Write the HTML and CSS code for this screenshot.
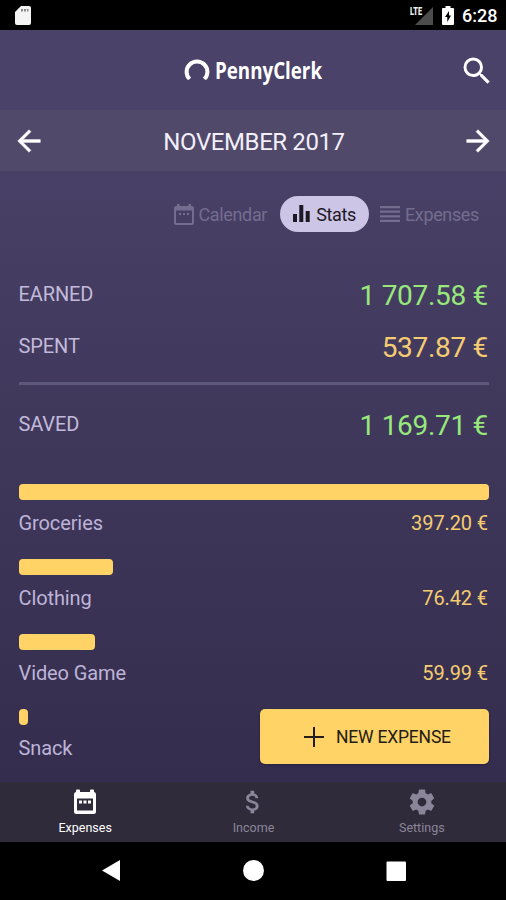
FILE: index.html
```
<!DOCTYPE html>
<html lang="en">
<head>
  <meta charset="UTF-8">
  <title>PennyClerk</title>
  <link rel="stylesheet" href="styles.css">
</head>
<body>
  <div class="app">
    <div class="status-bar">
      <svg class="sd-card" width="16" height="19" viewBox="0 0 16 19">
        <path fill="#f4f4f4" d="M6 0h8a2 2 0 0 1 2 2v15a2 2 0 0 1-2 2H2a2 2 0 0 1-2-2V6z"/>
        <path fill="#888" d="M6 3h2v2.500H6zM9 3h2v2.500H9zM12 3h1.500v2.500H12z"/>
      </svg>
      <div class="status-icons">
        <svg width="24" height="20" viewBox="0 0 24 20">
          <path fill="#4c4c4c" d="M23 1v18H5z"/>
          <path fill="#000" d="M0 0h13v11H0z"/>
          <text class="lte" x="0" y="9" textLength="12" lengthAdjust="spacingAndGlyphs">LTE</text>
        </svg>
        <svg class="battery" width="12" height="19" viewBox="0 0 12 19">
          <path fill="#fff" d="M3.500 0h5v2H11a1 1 0 0 1 1 1v15a1 1 0 0 1-1 1H1a1 1 0 0 1-1-1V3a1 1 0 0 1 1-1h2.500z"/>
          <path fill="#000" d="M7 5L3 11h2.300v5L9 9.500H7z"/>
        </svg>
        <span class="clock">6:28</span>
      </div>
    </div>

    <div class="main">
      <header class="header">
        <svg class="logo" width="144" height="44" viewBox="0 0 144 44">
          <path fill="none" stroke="#fff" stroke-width="4" d="M5.600 30.200A10.400 10.400 0 1 1 20.400 30.200"/>
          <path class="logo-cut" d="M0 30.800h27v4H0z"/>
          <text class="logo-text" x="31" y="30" textLength="107" lengthAdjust="spacingAndGlyphs">PennyClerk</text>
        </svg>
        <svg class="search" width="36" height="36" viewBox="0 0 24 24"><path fill="#fff" d="M15.500 14h-.79l-.28-.27A6.471 6.471 0 0 0 16 9.500 6.500 6.500 0 1 0 9.500 16c1.610 0 3.090-.59 4.230-1.570l.27.28v.79l5 4.990L20.490 19l-4.990-5zm-6 0C7.010 14 5 11.990 5 9.500S7.010 5 9.500 5 14 7.010 14 9.500 11.990 14 9.500 14z"/></svg>
      </header>

      <div class="month">
        <svg width="34" height="34" viewBox="0 0 24 24"><path fill="#fff" stroke="#fff" stroke-width=".3" d="M20 11H7.830l5.590-5.590L12 4l-8 8 8 8 1.410-1.410L7.830 13H20v-2z"/></svg>
        <span class="month-name">NOVEMBER 2017</span>
        <svg width="34" height="34" viewBox="0 0 24 24"><path fill="#fff" stroke="#fff" stroke-width=".3" d="M12 4l-1.410 1.410L16.170 11H4v2h12.170l-5.580 5.590L12 20l8-8z"/></svg>
      </div>

      <div class="tabs">
        <div class="tab">
          <svg width="20" height="22" viewBox="0 0 20 22">
            <path fill="none" stroke="currentColor" stroke-width="2" d="M2 4h16a1 1 0 0 1 1 1v15a1 1 0 0 1-1 1H2a1 1 0 0 1-1-1V5a1 1 0 0 1 1-1z"/>
            <path fill="currentColor" d="M3 1h2.500v3H3zM14.500 1H17v3h-2.500zM1 4h18v3.500H1zM5 10h2v2H5zM9 10h2v2H9zM13 10h2v2h-2z"/>
          </svg>
          <span>Calendar</span>
        </div>
        <div class="tab active">
          <svg width="17" height="18" viewBox="0 0 17 18"><path fill="currentColor" d="M0 9h4v8H0zM6.300 0h4v17h-4zM12.700 6h4v11h-4z"/></svg>
          <span>Stats</span>
        </div>
        <div class="tab">
          <svg width="20" height="17" viewBox="0 0 20 17"><path fill="currentColor" d="M0 0h20v2.200H0zM0 4.600h20v2.200H0zM0 9.200h20v2.200H0zM0 13.800h20V16H0z"/></svg>
          <span>Expenses</span>
        </div>
      </div>

      <div class="summary">
        <div class="summary-row"><span>EARNED</span><span class="sum green">1 707.58 €</span></div>
        <div class="summary-row"><span>SPENT</span><span class="sum yellow">537.87 €</span></div>
        <hr class="line">
        <div class="summary-row"><span>SAVED</span><span class="sum green">1 169.71 €</span></div>
      </div>

      <div class="categories">
        <div class="category">
          <div class="bar" style="width: 100%"></div>
          <div class="category-row"><span>Groceries</span><span class="yellow">397.20 €</span></div>
        </div>
        <div class="category">
          <div class="bar" style="width: 20.100%"></div>
          <div class="category-row"><span>Clothing</span><span class="yellow">76.42 €</span></div>
        </div>
        <div class="category">
          <div class="bar" style="width: 16.200%"></div>
          <div class="category-row"><span>Video Game</span><span class="yellow">59.99 €</span></div>
        </div>
        <div class="category">
          <div class="bar" style="width: 2.100%"></div>
          <div class="category-row"><span>Snack</span></div>
        </div>
      </div>

      <button class="new-expense">
        <svg width="20" height="20" viewBox="0 0 20 20"><path fill="currentColor" d="M9 0h2v9h9v2h-9v9H9v-9H0V9h9z"/></svg>
        <span>NEW EXPENSE</span>
      </button>
    </div>

    <nav class="bottom-nav">
      <div class="nav-item active">
        <svg width="24" height="26" viewBox="0 0 24 26">
          <path fill="currentColor" fill-rule="evenodd" d="M3 3V1.500a1 1 0 0 1 1-1h2a1 1 0 0 1 1 1V3h10V1.500a1 1 0 0 1 1-1h2a1 1 0 0 1 1 1V3a2.500 2.500 0 0 1 2 2.500v17a2.500 2.500 0 0 1-2.500 2.500h-17A2.500 2.500 0 0 1 1 22.500v-17A2.500 2.500 0 0 1 3 3zM4 9.500V21.500h16V9.500z"/>
          <path fill="currentColor" d="M6 11.500h3v3H6zM10.500 11.500h3v3h-3zM15 11.500h3v3h-3z"/>
        </svg>
        <span>Expenses</span>
      </div>
      <div class="nav-item">
        <svg width="30" height="30" viewBox="0 0 24 24"><path fill="currentColor" d="M11.800 10.900c-2.270-.59-3-1.200-3-2.150 0-1.090 1.010-1.850 2.700-1.850 1.780 0 2.440.85 2.500 2.100h2.210c-.07-1.720-1.120-3.300-3.210-3.810V3h-3v2.160c-1.940.42-3.500 1.680-3.500 3.610 0 2.310 1.910 3.460 4.700 4.130 2.500.6 3 1.480 3 2.410 0 .69-.49 1.790-2.700 1.790-2.060 0-2.870-.92-2.980-2.100h-2.200c.12 2.190 1.760 3.420 3.680 3.830V21h3v-2.150c1.950-.37 3.500-1.500 3.500-3.550 0-2.840-2.430-3.810-4.700-4.400z"/></svg>
        <span>Income</span>
      </div>
      <div class="nav-item">
        <svg width="30" height="30" viewBox="0 0 24 24"><path fill="currentColor" d="M19.430 12.980c.04-.32.07-.64.07-.98s-.03-.66-.07-.98l2.110-1.650c.19-.15.24-.42.12-.64l-2-3.460c-.12-.22-.39-.3-.61-.22l-2.490 1c-.52-.4-1.080-.73-1.690-.98l-.38-2.650A.488.488 0 0 0 14 2h-4c-.25 0-.46.18-.49.42l-.38 2.650c-.61.25-1.170.59-1.690.98l-2.490-1c-.23-.09-.49 0-.61.22l-2 3.460c-.13.22-.07.49.12.64l2.110 1.650c-.04.32-.07.65-.07.98s.03.66.07.98l-2.110 1.650c-.19.15-.24.42-.12.64l2 3.460c.12.22.39.3.61.22l2.490-1c.52.4 1.080.73 1.690.98l.38 2.650c.03.24.24.42.49.42h4c.25 0 .46-.18.49-.42l.38-2.650c.61-.25 1.170-.59 1.690-.98l2.490 1c.23.09.49 0 .61-.22l2-3.460c.12-.22.07-.49-.12-.64l-2.110-1.650zM12 15.500c-1.930 0-3.500-1.570-3.500-3.500s1.570-3.500 3.500-3.500 3.500 1.570 3.500 3.500-1.570 3.500-3.500 3.500z"/></svg>
        <span>Settings</span>
      </div>
    </nav>

    <div class="system-nav">
      <svg width="22" height="22" viewBox="0 0 22 22"><path fill="#fff" d="M19 0v21L1 10.500z"/></svg>
      <svg width="22" height="22" viewBox="0 0 22 22"><circle cx="10.500" cy="10.500" r="10.500" fill="#fff"/></svg>
      <svg width="22" height="22" viewBox="0 0 22 22"><rect x="1.500" y="1.500" width="19.500" height="19.500" rx="1" fill="#fff"/></svg>
    </div>
  </div>
</body>
</html>
```
FILE: styles.css
```
* {
  box-sizing: border-box;
}

body {
  margin: 0;
  font-family: Roboto, sans-serif;
  background-color: #000;
}

svg {
  display: block;
  flex-shrink: 0;
}

.app {
  display: flex;
  flex-direction: column;
  width: 506px;
  height: 900px;
  overflow: hidden;
}

/* Status bar */
.status-bar {
  display: flex;
  justify-content: space-between;
  height: 30px;
  padding: 6px 9px 0 15px;
  color: #fff;
}

.status-icons {
  display: flex;
}

.battery {
  margin: 0 8px 0 8px;
}

.clock {
  width: 35px;
  font-size: 18px;
  font-weight: 500;
  line-height: 20px;
  white-space: nowrap;
}

.lte {
  font-size: 11px;
  font-weight: 900;
  fill: #eee;
}

/* Main screen */
.main {
  position: relative;
  height: 752px;
  background: linear-gradient(#4a4268, #4a4268 80px, #342d4d);
}

.header {
  display: flex;
  align-items: center;
  justify-content: space-between;
  height: 80px;
  padding: 2px 11px 0 184px;
}

.logo {
  overflow: visible;
}

.logo-text {
  font-family: "Open Sans", sans-serif;
  font-size: 24px;
  font-weight: 700;
  fill: #fff;
}

.logo-cut {
  fill: #4a4268;
}

.month {
  display: flex;
  align-items: center;
  justify-content: space-between;
  height: 61px;
  padding: 0 11px 0 12px;
  background-color: #504969;
}

.month-name {
  padding: 3px 0 0 1px;
  font-size: 24px;
  letter-spacing: -0.4px;
  color: #f2effa;
}

/* Tabs */
.tabs {
  display: flex;
  justify-content: flex-end;
  height: 61px;
  padding: 25px 27px 0 0;
}

.tab {
  display: flex;
  align-items: center;
  gap: 5px;
  height: 36px;
  font-size: 18px;
  letter-spacing: -0.35px;
  color: #746d90;
}

.tab.active {
  margin: 0 11px 0 13px;
  padding: 0 13px;
  border-radius: 18px;
  background-color: #cdc5e6;
  color: #1c1824;
}

.tab.active svg {
  margin-right: 1px;
}

/* Totals */
.summary {
  padding: 36px 17px 0 18.500px;
}

.summary-row {
  display: flex;
  align-items: center;
  justify-content: space-between;
  height: 52px;
  font-size: 20px;
  letter-spacing: -0.1px;
  color: #c2badb;
}

.sum {
  padding: 2px 1px 0 0;
  font-size: 28px;
  letter-spacing: -0.3px;
}

.green {
  color: #98e87c;
}

.yellow {
  color: #f5cc70;
}

.line {
  height: 3px;
  margin: 10px 0 13px;
  border: none;
  background-color: #5f587d;
}

/* Bars */
.categories {
  padding: 34px 17px 0 18.500px;
}

.category {
  height: 75px;
}

.bar {
  height: 16px;
  border-radius: 4px;
  background-color: #ffd365;
}

.category-row {
  display: flex;
  justify-content: space-between;
  padding: 11px 1px 0 0;
  font-size: 20px;
  line-height: 24px;
  letter-spacing: -0.1px;
  color: #bdb4d8;
}

/* Floating button over the list */
.new-expense {
  position: absolute;
  right: 17px;
  bottom: 18px;
  display: flex;
  align-items: center;
  gap: 12px;
  width: 229px;
  height: 55px;
  padding: 0 0 0 44px;
  border: none;
  border-radius: 5px;
  background-color: #ffd365;
  box-shadow: 0 1px 3px rgba(20, 12, 50, 0.4);
  font-family: inherit;
  font-size: 17.500px;
  letter-spacing: -0.2px;
  color: #231c18;
}

/* Bottom navigation */
.bottom-nav {
  display: flex;
  height: 60px;
  padding-left: 1px;
  background-color: #2f2b3a;
}

.nav-item {
  display: flex;
  flex: 1;
  flex-direction: column;
  align-items: center;
  justify-content: flex-end;
  padding-bottom: 7px;
  font-size: 12.500px;
  line-height: 15px;
  color: #8a8598;
}

.nav-item svg {
  margin-bottom: 3px;
}

.nav-item.active {
  color: #fff;
}

.nav-item.active svg {
  margin-bottom: 5px;
}

.system-nav {
  display: flex;
  justify-content: space-between;
  height: 58px;
  padding: 18px 99px 0 101px;
}
```
